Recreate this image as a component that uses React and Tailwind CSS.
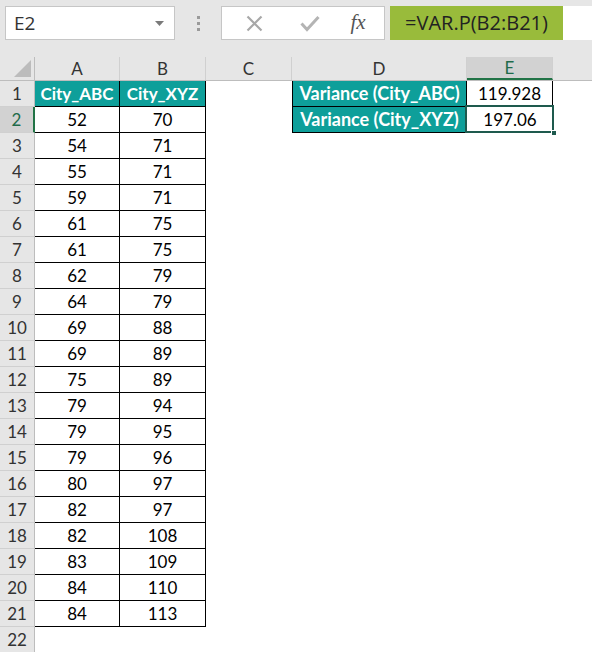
import React from 'react';

const colA = [52, 54, 55, 59, 61, 61, 62, 64, 69, 69, 75, 79, 79, 79, 80, 82, 82, 83, 84, 84];
const colB = [70, 71, 71, 71, 75, 75, 79, 79, 88, 89, 89, 94, 95, 96, 97, 97, 108, 109, 110, 113];

const font = { fontFamily: 'Lato, "Open Sans", Arial, sans-serif' };

function RowHeader({ n, selected }) {
  return (
    <div
      className={
        'w-[35px] h-[26px] shrink-0 flex items-center justify-center text-[17px] border-b border-[#d0d0d0] ' +
        (selected
          ? 'bg-[#d2d2d2] text-[#1f6b4a] border-r-2 border-r-[#217346]'
          : 'bg-[#e6e6e6] text-[#333] border-r border-r-[#bdbdbd]')
      }
    >
      {n}
    </div>
  );
}

export default function App() {
  const rows = [];
  for (let r = 1; r <= 22; r++) {
    let a = null;
    let b = null;
    if (r === 1) {
      a = (
        <div className="w-[85px] h-[26px] shrink-0 bg-[#0e9f9a] text-white font-bold text-[17px] flex items-center justify-center border-r border-b border-black">
          City_ABC
        </div>
      );
      b = (
        <div className="w-[86px] h-[26px] shrink-0 bg-[#0e9f9a] text-white font-bold text-[17px] flex items-center justify-center border-r border-b border-black">
          City_XYZ
        </div>
      );
    } else if (r <= 21) {
      a = (
        <div className="w-[85px] h-[26px] shrink-0 flex items-center justify-center text-[17px] text-black border-r border-b border-black">
          {colA[r - 2]}
        </div>
      );
      b = (
        <div className="w-[86px] h-[26px] shrink-0 flex items-center justify-center text-[17px] text-black border-r border-b border-black">
          {colB[r - 2]}
        </div>
      );
    } else {
      a = <div className="w-[85px] h-[26px] shrink-0" />;
      b = <div className="w-[86px] h-[26px] shrink-0" />;
    }

    let de = null;
    if (r === 1 || r === 2) {
      const label = r === 1 ? 'Variance (City_ABC)' : 'Variance (City_XYZ)';
      const val = r === 1 ? '119.928' : '197.06';
      de = (
        <>
          <div className="w-[175px] h-[26px] shrink-0 bg-[#0e9f9a] text-white font-bold text-[18px] flex items-center justify-center border-l border-r border-b border-black whitespace-nowrap">
            {label}
          </div>
          {r === 1 ? (
            <div className="w-[86px] h-[26px] shrink-0 flex items-center justify-center text-[17px] text-black border-r border-b border-black">
              {val}
            </div>
          ) : (
            <div className="relative w-[86px] h-[26px] shrink-0 flex items-center justify-center text-[17px] text-black border-b border-black">
              <div className="absolute -left-[2px] -top-[2px] w-[89px] h-[28px] border-[2.5px] border-[#1e5a4e]" />
              <div className="absolute -right-[4px] -bottom-[4px] w-[6px] h-[6px] bg-[#1e5a4e] border border-white" />
              {val}
            </div>
          )}
        </>
      );
    }

    rows.push(
      <div key={r} className="flex">
        <RowHeader n={r} selected={r === 2} />
        {a}
        {b}
        <div className="w-[86px] h-[26px] shrink-0" />
        {de}
      </div>
    );
  }

  return (
    <div className="w-[592px] h-[652px] bg-white overflow-hidden" style={font}>
      {/* toolbar */}
      <div className="h-[57px] bg-[#e6e6e6] flex items-start pt-[6px]">
        <div className="ml-[5px] w-[170px] h-[34px] bg-white border border-[#c6c6c6] flex items-center justify-between pl-[8px] pr-[10px]">
          <span className="text-[19px] text-[#333]" style={{ fontFamily: '"Open Sans", Arial, sans-serif' }}>E2</span>
          <svg width="9" height="5" viewBox="0 0 9 5">
            <path d="M0 0 L9 0 L4.5 5 Z" fill="#7a7a7a" />
          </svg>
        </div>
        <div className="w-[46px] h-[34px] flex flex-col items-center justify-center gap-[3px]">
          <div className="w-[3px] h-[3px] bg-[#9a9a9a]" />
          <div className="w-[3px] h-[3px] bg-[#9a9a9a]" />
          <div className="w-[3px] h-[3px] bg-[#9a9a9a]" />
        </div>
        <div className="w-[164px] h-[34px] bg-white border border-[#c6c6c6] flex items-center">
          <div className="w-[56px] flex justify-center pl-[8px]">
            <svg width="17" height="17" viewBox="0 0 17 17">
              <path d="M1.5 1.5 L15.5 15.5 M15.5 1.5 L1.5 15.5" stroke="#a8a8a8" strokeWidth="2.2" />
            </svg>
          </div>
          <div className="w-[56px] flex justify-center pl-[8px]">
            <svg width="20" height="17" viewBox="0 0 20 17">
              <path d="M1.5 8.5 L7 14.5 L18.5 2" stroke="#b4b4b4" strokeWidth="3" fill="none" />
            </svg>
          </div>
          <div className="flex-1 flex justify-center pr-[2px]">
            <span className="italic text-[21px] text-[#555]" style={{ fontFamily: '"Liberation Serif", "Times New Roman", serif' }}>fx</span>
          </div>
        </div>
        <div className="ml-[5px] flex-1 h-[34px] bg-white flex">
          <div className="w-[173px] h-full bg-[#99bb3b] flex items-center justify-center">
            <span className="text-[20px] text-[#222]" style={{ fontFamily: '"Open Sans", Arial, sans-serif' }}>=VAR.P(B2:B21)</span>
          </div>
        </div>
      </div>

      {/* column headers */}
      <div className="flex h-[24px] bg-[#e6e6e6] border-b border-[#bdbdbd]">
        <div className="w-[35px] shrink-0 border-r border-[#bdbdbd] flex items-end justify-end pr-[3px] pb-[3px]">
          <svg width="17" height="17" viewBox="0 0 17 17">
            <path d="M17 0 L17 17 L0 17 Z" fill="#bcbcbc" />
          </svg>
        </div>
        <div className="w-[85px] shrink-0 border-r border-[#d0d0d0] flex items-center justify-center text-[17px] text-[#333]">A</div>
        <div className="w-[86px] shrink-0 border-r border-[#d0d0d0] flex items-center justify-center text-[17px] text-[#333]">B</div>
        <div className="w-[86px] shrink-0 border-r border-[#d0d0d0] flex items-center justify-center text-[17px] text-[#333]">C</div>
        <div className="w-[175px] shrink-0 border-r border-[#d0d0d0] flex items-center justify-center text-[17px] text-[#333]">D</div>
        <div className="w-[86px] shrink-0 bg-[#d2d2d2] border-r border-[#d0d0d0] border-b-2 border-b-[#217346] flex items-center justify-center text-[17px] text-[#1f6b4a]">E</div>
        <div className="flex-1" />
      </div>

      {/* grid */}
      <div>{rows}</div>
    </div>
  );
}
